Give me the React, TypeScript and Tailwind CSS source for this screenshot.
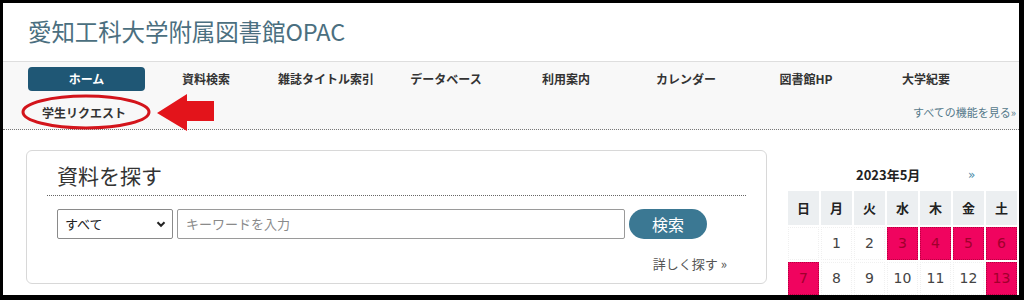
import React from "react";

const jp = { fontFamily: '"Noto Sans CJK JP", "Noto Sans", sans-serif' };

const navItems = ["資料検索", "雑誌タイトル索引", "データベース", "利用案内", "カレンダー", "図書館HP", "大学紀要"];

type Cell = { d?: string; h?: boolean };
const rows: Cell[][] = [
  [{}, { d: "1" }, { d: "2" }, { d: "3", h: true }, { d: "4", h: true }, { d: "5", h: true }, { d: "6", h: true }],
  [{ d: "7", h: true }, { d: "8" }, { d: "9" }, { d: "10" }, { d: "11" }, { d: "12" }, { d: "13", h: true }],
];

export default function App() {
  return (
    <div className="w-[1024px] h-[300px] bg-black overflow-hidden" style={jp}>
      <div className="relative ml-[3px] mt-[3px] w-[1016px] h-[292px] bg-white overflow-hidden">
        {/* header */}
        <div className="h-[59px] border-b border-[#dedede] flex items-center pl-[25px]">
          <span className="text-[23.5px] text-[#4b6f80] leading-none tracking-[-0.1px]">愛知工科大学附属図書館OPAC</span>
        </div>
        {/* nav */}
        <div className="bg-[#f8f8f8] border-b border-dotted border-[#777] pt-[5px]">
          <div className="grid grid-cols-[repeat(8,120px)] ml-[23px] h-[24px]">
            <div className="px-[2px]">
              <div className="h-[24px] w-[117px] rounded-[4px] bg-[#1f5775] text-white text-[12px] font-bold flex items-center justify-center">ホーム</div>
            </div>
            {navItems.map((n) => (
              <div key={n} className="h-[24px] flex items-center justify-center text-[12px] font-bold text-[#333]">{n}</div>
            ))}
          </div>
          <div className="h-[38px] flex items-center justify-between pl-[39px] pr-[3px] pt-[5px]">
            <span className="text-[12px] font-bold text-[#333]">学生リクエスト</span>
            <span className="text-[11px] text-[#55788a]">すべての機能を見る»</span>
          </div>
        </div>
        {/* main */}
        <div className="flex pt-[20px]">
          <div className="ml-[23px] w-[741px] h-[134px] border border-[#d8d8d8] rounded-[6px] px-[20px]">
            <div className="h-[45px] flex items-center pt-[4px] pl-[10px] border-b border-dotted border-[#666]">
              <span className="text-[21px] text-[#333] leading-none">資料を探す</span>
            </div>
            <div className="flex items-center mt-[13px] h-[30px] pl-[10px]">
              <div className="w-[116px] h-[30px] border border-[#8a8a8a] rounded-[2px] flex items-center justify-between pl-[7px] pr-[6px]">
                <span className="text-[13px] text-[#222]">すべて</span>
                <svg width="10" height="10" viewBox="0 0 10 10">
                  <path d="M1.5 3.2 L5 6.8 L8.5 3.2" fill="none" stroke="#222" strokeWidth="2" />
                </svg>
              </div>
              <div className="ml-[4px] w-[448px] h-[30px] border border-[#9a9a9a] rounded-[2px] flex items-center pl-[8px]">
                <span className="text-[13px] text-[#8a8a8a]">キーワードを入力</span>
              </div>
              <div className="ml-[4px] w-[78px] h-[30px] rounded-full bg-[#3b7893] text-white text-[16px] flex items-center justify-center">検索</div>
            </div>
            <div className="mt-[16px] text-right pr-[19px] text-[13px] leading-[18px] text-[#555]">詳しく探す »</div>
          </div>
          <div className="ml-[21px] w-[231px]" style={{ fontFamily: '"DejaVu Sans", "Noto Sans CJK JP", sans-serif' }}>
            <div className="h-[40px] pt-[9px] flex items-center relative">
              <span className="ml-[68px] text-[13px] font-bold text-[#222]" style={jp}>2023年5月</span>
              <span className="absolute left-[180px] top-[16px] text-[12px] text-[#4a8aa8]">»</span>
            </div>
            <div className="grid grid-cols-[repeat(7,31px)] grid-rows-[34px_33px_33px] gap-[2px] mt-[1px]">
              {["日", "月", "火", "水", "木", "金", "土"].map((w) => (
                <div key={w} className="bg-[#eceff1] flex items-center justify-center text-[13px] font-bold text-[#222]" style={jp}>{w}</div>
              ))}
              {rows.flat().map((c, i) => (
                <div
                  key={i}
                  className={
                    c.h
                      ? "bg-[#f0045f] border border-dotted border-[#b80040] flex items-center justify-center text-[14px] text-[#a0002c]"
                      : "bg-white border border-dotted border-[#f0f0f0] flex items-center justify-center text-[14px] text-[#444]"
                  }
                >
                  {c.d}
                </div>
              ))}
            </div>
          </div>
        </div>
        {/* annotation overlay */}
        <svg className="absolute left-0 top-0 pointer-events-none" width="1016" height="292">
          <ellipse cx="83" cy="109" rx="63" ry="16" fill="none" stroke="#d3141b" strokeWidth="3" />
          <polygon points="154,110 184,91 184,98 211,98 211,118 184,118 184,128" fill="#e3141b" />
        </svg>
      </div>
    </div>
  );
}
